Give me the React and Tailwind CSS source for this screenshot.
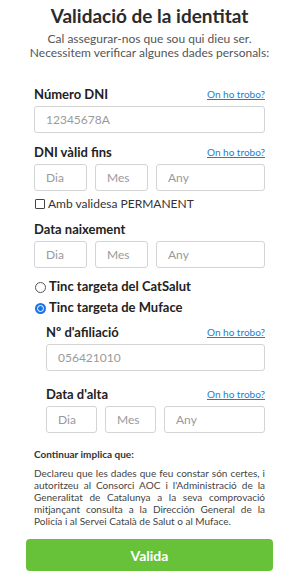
import React from "react";

function Label({ children, link }) {
  return (
    <div className="flex items-center justify-between h-[16px]">
      <span className="text-[13px] font-bold text-[#222] leading-[16px]">{children}</span>
      {link && (
        <a className="text-[10px] text-[#1a7fd0] underline leading-[12px]">On ho trobo?</a>
      )}
    </div>
  );
}

function Input({ ph, className = "" }) {
  return (
    <div
      className={
        "h-[27px] border border-[#d4d4d4] rounded-[3px] bg-white flex items-center pl-[11px] text-[12px] text-[#9a9a9a] " +
        className
      }
    >
      {ph}
    </div>
  );
}

function DateRow({ small }) {
  return (
    <div className="flex gap-[8px]">
      <Input ph="Dia" className={small ? "w-[51px]" : "w-[53px]"} />
      <Input ph="Mes" className={small ? "w-[51px]" : "w-[53px]"} />
      <Input ph="Any" className="flex-1" />
    </div>
  );
}

export default function App() {
  return (
    <div className="w-[286px] h-[587px] bg-white font-['Lato',sans-serif] text-[#333] overflow-hidden">
      <h1 className="text-center text-[19px] font-bold leading-[22px] pt-[5px] pl-[13px] text-[#2b2b2b]">
        Validació de la identitat
      </h1>
      <p className="text-center text-[12px] leading-[14px] text-[#555] mt-[5px] pl-[13px]">
        Cal assegurar-nos que sou qui dieu ser.
        <br />
        Necessitem verificar algunes dades personals:
      </p>

      <div className="ml-[34px] w-[231px] mt-[26px]">
        <Label link>Número DNI</Label>
        <Input ph="12345678A" className="mt-[4px]" />

        <div className="mt-[11px]">
          <Label link>DNI vàlid fins</Label>
        </div>
        <div className="mt-[4px]">
          <DateRow />
        </div>
        <div className="flex items-center mt-[7px] h-[12px] text-[12px] text-[#333]">
          <span className="w-[10px] h-[10px] border border-[#444] rounded-[1px] mr-[3px] ml-[1px]"></span>
          Amb validesa PERMANENT
        </div>

        <div className="mt-[11px]">
          <Label>Data naixement</Label>
        </div>
        <div className="mt-[4px]">
          <DateRow />
        </div>

        <div className="flex items-center mt-[12px] h-[14px] text-[13px] font-bold text-[#222]">
          <span className="w-[11px] h-[11px] rounded-full border border-[#555] mr-[3px] ml-[1px]"></span>
          Tinc targeta del CatSalut
        </div>
        <div className="flex items-center mt-[7px] h-[14px] text-[13px] font-bold text-[#222]">
          <span className="w-[11px] h-[11px] rounded-full bg-[#1a73e8] flex items-center justify-center mr-[3px] ml-[1px]">
            <span className="w-[7px] h-[7px] rounded-full bg-[#1a73e8] border border-white"></span>
          </span>
          Tinc targeta de Muface
        </div>

        <div className="ml-[12px] mt-[9px]">
          <Label link>Nº d'afiliació</Label>
          <Input ph="056421010" className="mt-[4px]" />
          <div className="mt-[15px]">
            <Label link>Data d'alta</Label>
          </div>
          <div className="mt-[4px]">
            <DateRow small />
          </div>
        </div>

        <div className="mt-[15px] text-[10px] font-bold text-[#333] leading-[13px]">
          Continuar implica que:
        </div>
        <p className="mt-[6px] text-[10px] leading-[12px] text-[#444] text-justify">
          Declareu que les dades que feu constar són certes, i autoritzeu al Consorci AOC i l'Administració de la
          Generalitat de Catalunya a la seva comprovació mitjançant consulta a la Dirección General de la Policía i
          al Servei Català de Salut o al Muface.
        </p>
      </div>

      <button className="ml-[26px] w-[247px] h-[32px] mt-[12px] rounded-[4px] bg-[#67c23a] text-white font-bold text-[14px] flex items-center justify-center">
        Valida
      </button>
    </div>
  );
}
